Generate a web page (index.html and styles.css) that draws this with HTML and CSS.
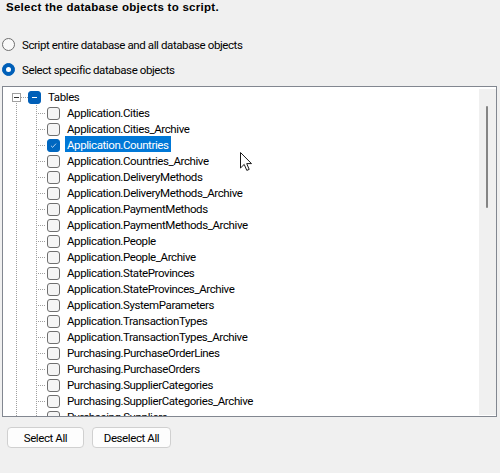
FILE: index.html
```html
<!DOCTYPE html>
<html>
<head>
<meta charset="utf-8">
<link rel="stylesheet" href="styles.css">
</head>
<body>
<div class="page">
  <div class="title">Select the database objects to script.</div>
  <div class="radios">
    <label class="radio"><span class="rb"></span><span>Script entire database and all database objects</span></label>
    <label class="radio"><span class="rb on"></span><span>Select specific database objects</span></label>
  </div>
  <div class="treebox">
    <div class="tree">
      <div class="row root">
        <span class="lead"></span>
        <span class="expcol"><span class="exp"></span></span>
        <span class="hconn"></span>
        <span class="cb partial"></span>
        <span class="lbl">Tables</span>
      </div>
      <div class="row child"><span class="g1"></span><span class="conn"></span><span class="cb"></span><span class="lbl">Application.Cities</span></div>
      <div class="row child"><span class="g1"></span><span class="conn"></span><span class="cb"></span><span class="lbl">Application.Cities_Archive</span></div>
      <div class="row child"><span class="g1"></span><span class="conn"></span><span class="cb checked"><svg width="13" height="13" viewBox="0 0 13 13"><path d="M3.5 6.8 L5.5 8.7 L9.5 4.3" fill="none" stroke="#cfe3f7" stroke-width="1"/></svg></span><span class="lbl sel">Application.Countries</span></div>
      <div class="row child"><span class="g1"></span><span class="conn"></span><span class="cb"></span><span class="lbl">Application.Countries_Archive</span></div>
      <div class="row child"><span class="g1"></span><span class="conn"></span><span class="cb"></span><span class="lbl">Application.DeliveryMethods</span></div>
      <div class="row child"><span class="g1"></span><span class="conn"></span><span class="cb"></span><span class="lbl">Application.DeliveryMethods_Archive</span></div>
      <div class="row child"><span class="g1"></span><span class="conn"></span><span class="cb"></span><span class="lbl">Application.PaymentMethods</span></div>
      <div class="row child"><span class="g1"></span><span class="conn"></span><span class="cb"></span><span class="lbl">Application.PaymentMethods_Archive</span></div>
      <div class="row child"><span class="g1"></span><span class="conn"></span><span class="cb"></span><span class="lbl">Application.People</span></div>
      <div class="row child"><span class="g1"></span><span class="conn"></span><span class="cb"></span><span class="lbl">Application.People_Archive</span></div>
      <div class="row child"><span class="g1"></span><span class="conn"></span><span class="cb"></span><span class="lbl">Application.StateProvinces</span></div>
      <div class="row child"><span class="g1"></span><span class="conn"></span><span class="cb"></span><span class="lbl">Application.StateProvinces_Archive</span></div>
      <div class="row child"><span class="g1"></span><span class="conn"></span><span class="cb"></span><span class="lbl">Application.SystemParameters</span></div>
      <div class="row child"><span class="g1"></span><span class="conn"></span><span class="cb"></span><span class="lbl">Application.TransactionTypes</span></div>
      <div class="row child"><span class="g1"></span><span class="conn"></span><span class="cb"></span><span class="lbl">Application.TransactionTypes_Archive</span></div>
      <div class="row child"><span class="g1"></span><span class="conn"></span><span class="cb"></span><span class="lbl">Purchasing.PurchaseOrderLines</span></div>
      <div class="row child"><span class="g1"></span><span class="conn"></span><span class="cb"></span><span class="lbl">Purchasing.PurchaseOrders</span></div>
      <div class="row child"><span class="g1"></span><span class="conn"></span><span class="cb"></span><span class="lbl">Purchasing.SupplierCategories</span></div>
      <div class="row child"><span class="g1"></span><span class="conn"></span><span class="cb"></span><span class="lbl">Purchasing.SupplierCategories_Archive</span></div>
      <div class="row child"><span class="g1"></span><span class="conn"></span><span class="cb"></span><span class="lbl">Purchasing.Suppliers</span></div>
    </div>
    <div class="scrollbar"><div class="thumb"></div></div>
  </div>
  <div class="buttons">
    <button class="btn b1">Select All</button>
    <button class="btn b2">Deselect All</button>
  </div>
  <svg class="cursor" width="13" height="20" viewBox="0 0 13 20"><path d="M0.5 0.5 L0.5 16 L4.2 12.4 L6.8 18.4 L9.2 17.4 L6.7 11.6 L11.5 11.6 Z" fill="#fff" stroke="#1a1a1a" stroke-width="1" stroke-linejoin="miter"/></svg>
</div>
</body>
</html>
```
FILE: styles.css
```css
html, body {
  margin: 0;
  padding: 0;
  background: #f0f0f0;
}
body {
  font-family: Roboto, "Liberation Sans", Arial, sans-serif;
  font-size: 11.5px;
  color: #000;
  width: 500px;
  height: 473px;
  overflow: hidden;
}
.page {
  position: relative;
  width: 500px;
  height: 473px;
}
.title {
  font-family: "Liberation Sans", Arial, sans-serif;
  font-size: 11.5px;
  font-weight: bold;
  line-height: 14px;
  padding-left: 6px;
  letter-spacing: 0.27px;
}
.radios {
  display: flex;
  flex-direction: column;
  gap: 9px;
  margin-top: 22px;
}
.radio {
  display: flex;
  align-items: center;
  height: 16px;
  gap: 7px;
  padding-left: 2px;
  letter-spacing: -0.4px;
}
.radio span:last-child {
  padding-top: 1px;
}
.rb {
  box-sizing: border-box;
  width: 13px;
  height: 13px;
  border-radius: 50%;
  border: 1px solid #6e6e6e;
  background: #f9f9f9;
  flex: none;
  display: flex;
  align-items: center;
  justify-content: center;
}
.rb.on {
  border-color: #005fb8;
  background: #005fb8;
}
.rb.on::after {
  content: "";
  width: 5px;
  height: 5px;
  border-radius: 50%;
  background: #fff;
}
.treebox {
  box-sizing: border-box;
  margin: 9px 0 0 2px;
  width: 495px;
  height: 331px;
  border: 1px solid #828790;
  background: #fff;
  display: flex;
  overflow: hidden;
}
.tree {
  flex: 1;
  padding-top: 2px;
  overflow: hidden;
  display: flex;
  flex-direction: column;
}
.row {
  display: flex;
  align-items: center;
  height: 16px;
  flex: none;
}
.lead { width: 9px; height: 16px; flex: none; }
.expcol {
  width: 9px;
  height: 16px;
  flex: none;
  display: flex;
  align-items: center;
  background: repeating-linear-gradient(to bottom, #a0a0a0 0 1px, transparent 1px 2px) 4px 12px / 1px 4px no-repeat;
}
.exp {
  box-sizing: border-box;
  width: 9px;
  height: 9px;
  border: 1px solid #a0a0a0;
  background: #fff;
  display: flex;
  align-items: center;
  justify-content: center;
}
.exp::after {
  content: "";
  width: 5px;
  height: 1px;
  background: #333;
}
.hconn {
  width: 7px;
  height: 16px;
  flex: none;
  background: repeating-linear-gradient(to right, #a0a0a0 0 1px, transparent 1px 2px) 0 8px / 7px 1px no-repeat;
}
.g1 {
  width: 33px;
  height: 16px;
  flex: none;
  background: repeating-linear-gradient(to bottom, #a0a0a0 0 1px, transparent 1px 2px) 13px 0 / 1px 16px no-repeat;
}
.conn {
  width: 11px;
  height: 16px;
  flex: none;
  background:
    repeating-linear-gradient(to bottom, #a0a0a0 0 1px, transparent 1px 2px) 0 0 / 1px 16px no-repeat,
    repeating-linear-gradient(to right, #a0a0a0 0 1px, transparent 1px 2px) 0 8px / 10px 1px no-repeat;
}
.cb {
  box-sizing: border-box;
  width: 13px;
  height: 13px;
  flex: none;
  border: 1px solid #6f6f6f;
  border-radius: 3px;
  background: #f5f5f5;
  display: flex;
  align-items: center;
  justify-content: center;
}
.cb svg { display: block; }
.cb.checked {
  border-color: #0067c0;
  background: #0067c0;
}
.cb.partial {
  border-color: #005fb8;
  background: #005fb8;
}
.cb.partial::after {
  content: "";
  width: 5px;
  height: 1px;
  background: #fff;
}
.lbl {
  margin: -1px 0 1px 5px;
  padding: 2px 2px 0 2px;
  height: 16px;
  box-sizing: border-box;
  line-height: 14px;
  white-space: nowrap;
  letter-spacing: -0.4px;
}
.lbl.sel {
  background: #0078d7;
  color: #fff;
}
.scrollbar {
  width: 17px;
  flex: none;
  margin: 2px 0 1px 0;
  background: #f0f0f0;
  position: relative;
}
.thumb {
  position: absolute;
  left: 7px;
  top: 17px;
  width: 2px;
  height: 102px;
  background: #858585;
  border-radius: 1px;
}
.buttons {
  display: flex;
  gap: 8px;
  margin: 10px 0 0 7px;
}
.btn {
  box-sizing: border-box;
  height: 21px;
  padding: 1px 0 0 0;
  font-family: Roboto, "Liberation Sans", Arial, sans-serif;
  font-size: 11.5px;
  letter-spacing: -0.4px;
  color: #000;
  background: #fdfdfd;
  border: 1px solid #d0d0d0;
  border-radius: 4px;
}
.b1 { width: 77px; }
.b2 { width: 79px; }
.cursor {
  position: absolute;
  left: 240px;
  top: 152px;
}
```
